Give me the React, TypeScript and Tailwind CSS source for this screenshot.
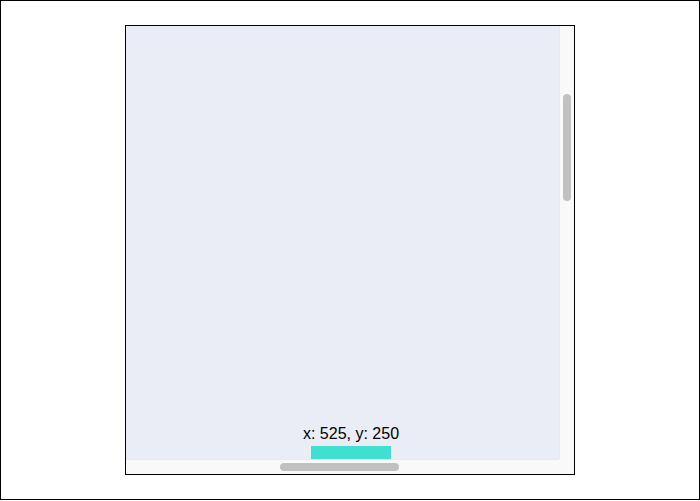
import React, { useEffect, useRef } from 'react';

// scroll offsets shown in the label
const SCROLL_X = 525;
const SCROLL_Y = 250;

export default function App() {
  const viewRef = useRef<HTMLDivElement>(null);

  useEffect(() => {
    if (viewRef.current) {
      viewRef.current.scrollLeft = SCROLL_X;
      viewRef.current.scrollTop = SCROLL_Y;
    }
  }, []);

  return (
    <div className="w-[700px] h-[500px] border border-black bg-white flex items-center justify-center font-['Liberation_Sans',Arial,sans-serif]">
      <div className="w-[450px] h-[450px] border border-black bg-[#f9f9f9] flex flex-col">
        <div className="flex h-[433px]">
          {/* viewport */}
          <div ref={viewRef} className="w-[433px] h-[433px] overflow-hidden">
            <div className="relative w-[1500px] h-[1650px] bg-[#eaedf5]">
              <div className="absolute left-[700px] top-[649px] w-[100px] flex flex-col items-center">
                <span className="text-[16px] leading-[18px] text-black whitespace-nowrap">x: {SCROLL_X}, y: {SCROLL_Y}</span>
                <div className="mt-[3px] w-[80px] h-[20px] bg-[#40e0d0]" />
              </div>
            </div>
          </div>
          {/* vertical scrollbar */}
          <div className="w-[15px] border-l border-[#e8e8ec] bg-[#f9f9f9] pl-[3px] pt-[68px]">
            <div className="w-[8px] h-[107px] rounded-full bg-[#c1c1c1]" />
          </div>
        </div>
        <div className="flex h-[15px]">
          {/* horizontal scrollbar */}
          <div className="w-[433px] border-t border-[#e8e8ec] bg-[#f9f9f9] pt-[3px] pl-[154px]">
            <div className="w-[119px] h-[8px] rounded-full bg-[#c1c1c1]" />
          </div>
          <div className="w-[15px] bg-[#f9f9f9]" />
        </div>
      </div>
    </div>
  );
}
